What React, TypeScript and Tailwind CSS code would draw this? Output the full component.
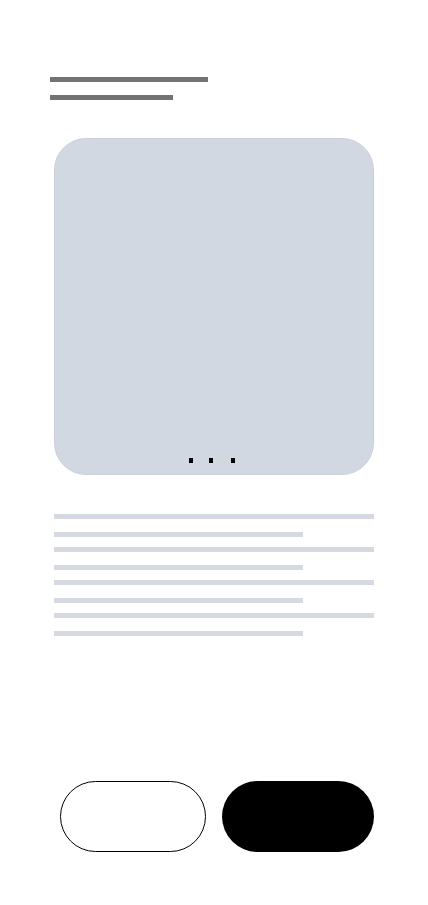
import React from "react";

const lines = [true, false, true, false, true, false, true, false];

export default function App() {
  return (
    <div className="min-h-[905px] w-[428px] bg-white flex flex-col">
      <div className="flex flex-col gap-[13px] pl-[50px] pt-[77px]">
        <div className="h-[5px] w-[158px] bg-[#737373]" />
        <div className="h-[5px] w-[123px] bg-[#737373]" />
      </div>

      <div className="mx-[54px] mt-[38px] h-[337px] rounded-[32px] border border-[#c9d0da] bg-[#d1d8e1] flex flex-col justify-end items-center pb-[11px]">
        <div className="flex mr-[4px]">
          <span className="w-1 h-[5px] bg-black" />
          <span className="w-1 h-[5px] bg-black ml-4" />
          <span className="w-1 h-[5px] bg-black ml-[18px]" />
        </div>
      </div>

      <div className="mx-[54px] mt-[39px] flex flex-col">
        {lines.map((full, i) => (
          <div
            key={i}
            className={`h-[5px] bg-[#d4d9e2] ${full ? "w-[320px]" : "w-[249px]"} ${i === 0 ? "" : full ? "mt-[10px]" : "mt-[13px]"}`}
          />
        ))}
      </div>

      <div className="mt-[145px] flex gap-4 pl-[60px] pr-[54px]">
        <button className="h-[71px] w-[146px] rounded-full border border-black bg-white" />
        <button className="h-[71px] w-[152px] rounded-full bg-black" />
      </div>
    </div>
  );
}
